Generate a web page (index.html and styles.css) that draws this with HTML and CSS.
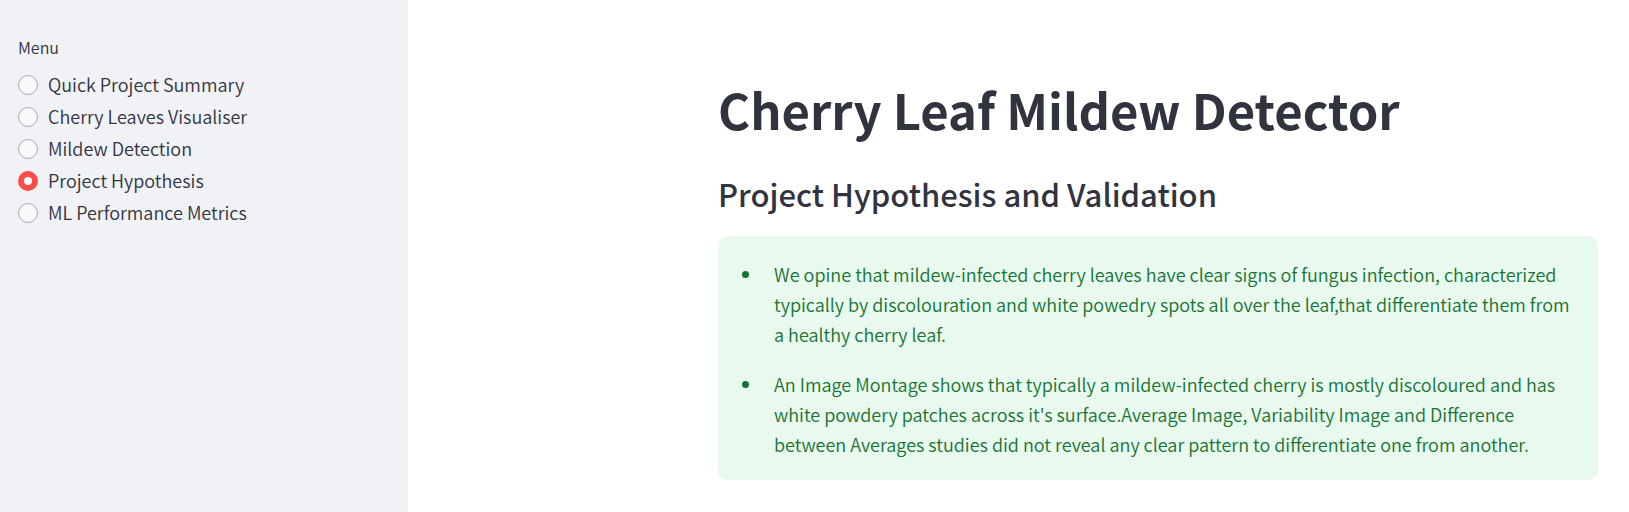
FILE: index.html
```html
<!DOCTYPE html>
<html lang="en">
<head>
<meta charset="utf-8">
<title>Cherry Leaf Mildew Detector</title>
<link rel="stylesheet" href="styles.css">
</head>
<body>
<div class="app">
  <aside class="sidebar">
    <fieldset class="menu">
      <legend class="menu-title">Menu</legend>
      <label class="option"><input class="radio" type="radio" name="page">Quick Project Summary</label>
      <label class="option"><input class="radio" type="radio" name="page">Cherry Leaves Visualiser</label>
      <label class="option"><input class="radio" type="radio" name="page">Mildew Detection</label>
      <label class="option"><input class="radio" type="radio" name="page" checked>Project Hypothesis</label>
      <label class="option"><input class="radio" type="radio" name="page">ML Performance Metrics</label>
    </fieldset>
  </aside>
  <main class="main">
    <div class="content">
      <h1 class="title">Cherry Leaf Mildew Detector</h1>
      <h2 class="subtitle">Project Hypothesis and Validation</h2>
      <section class="notice">
        <ul class="points">
          <li class="point">We opine that mildew-infected cherry leaves have clear signs of fungus infection, characterized typically by discolouration and white powedry spots all over the leaf,that differentiate them from a healthy cherry leaf.</li>
          <li class="point">An Image Montage shows that typically a mildew-infected cherry is mostly discoloured and has white powdery patches across it's surface.Average Image, Variability Image and Difference between Averages studies did not reveal any clear pattern to differentiate one from another.</li>
        </ul>
      </section>
    </div>
  </main>
</div>
</body>
</html>
```
FILE: styles.css
```css
* { box-sizing: border-box; }

body {
  margin: 0;
  background: #fff;
  color: #31333f;
  font-family: "Source Sans Pro", "Noto Sans CJK SC", sans-serif;
  font-size: 18px;
  font-weight: 350;
}

.app {
  display: flex;
  min-height: 100vh;
}

.sidebar {
  flex: 0 0 408px;
  padding: 35px 18px;
  background: #f0f2f6;
}

.menu {
  margin: 0;
  padding: 0;
  border: 0;
}

.menu-title {
  padding: 0;
  margin-bottom: 9px;
  font-size: 16px;
  line-height: 24px;
}

.option {
  display: flex;
  align-items: center;
  gap: 10px;
  height: 32px;
  line-height: 32px;
}

.radio {
  appearance: none;
  flex: none;
  width: 20px;
  height: 20px;
  margin: 2px 0 0;
  border: 1px solid #a9abb2;
  border-radius: 50%;
  background: #f9f9fb;
}

.radio:checked {
  border: 6px solid #ff4b4b;
  background: #fff;
}

.main {
  flex: 1;
  padding: 72px 31px 0 310px;
}

.title {
  margin: 0;
  padding: 4px 0 28px;
  font-size: 49px;
  font-weight: 700;
  line-height: 66px;
}

.subtitle {
  margin: 0 0 18px;
  font-size: 31px;
  font-weight: 500;
  line-height: 48px;
}

.notice {
  padding: 23px 16px 21px 45px;
  border-radius: 10px;
  background: #e8f9ee;
  color: #177233;
}

.points {
  display: flex;
  flex-direction: column;
  gap: 20px;
  margin: 0;
  padding: 0;
  line-height: 30px;
}

.point { padding-left: 11px; }
```
